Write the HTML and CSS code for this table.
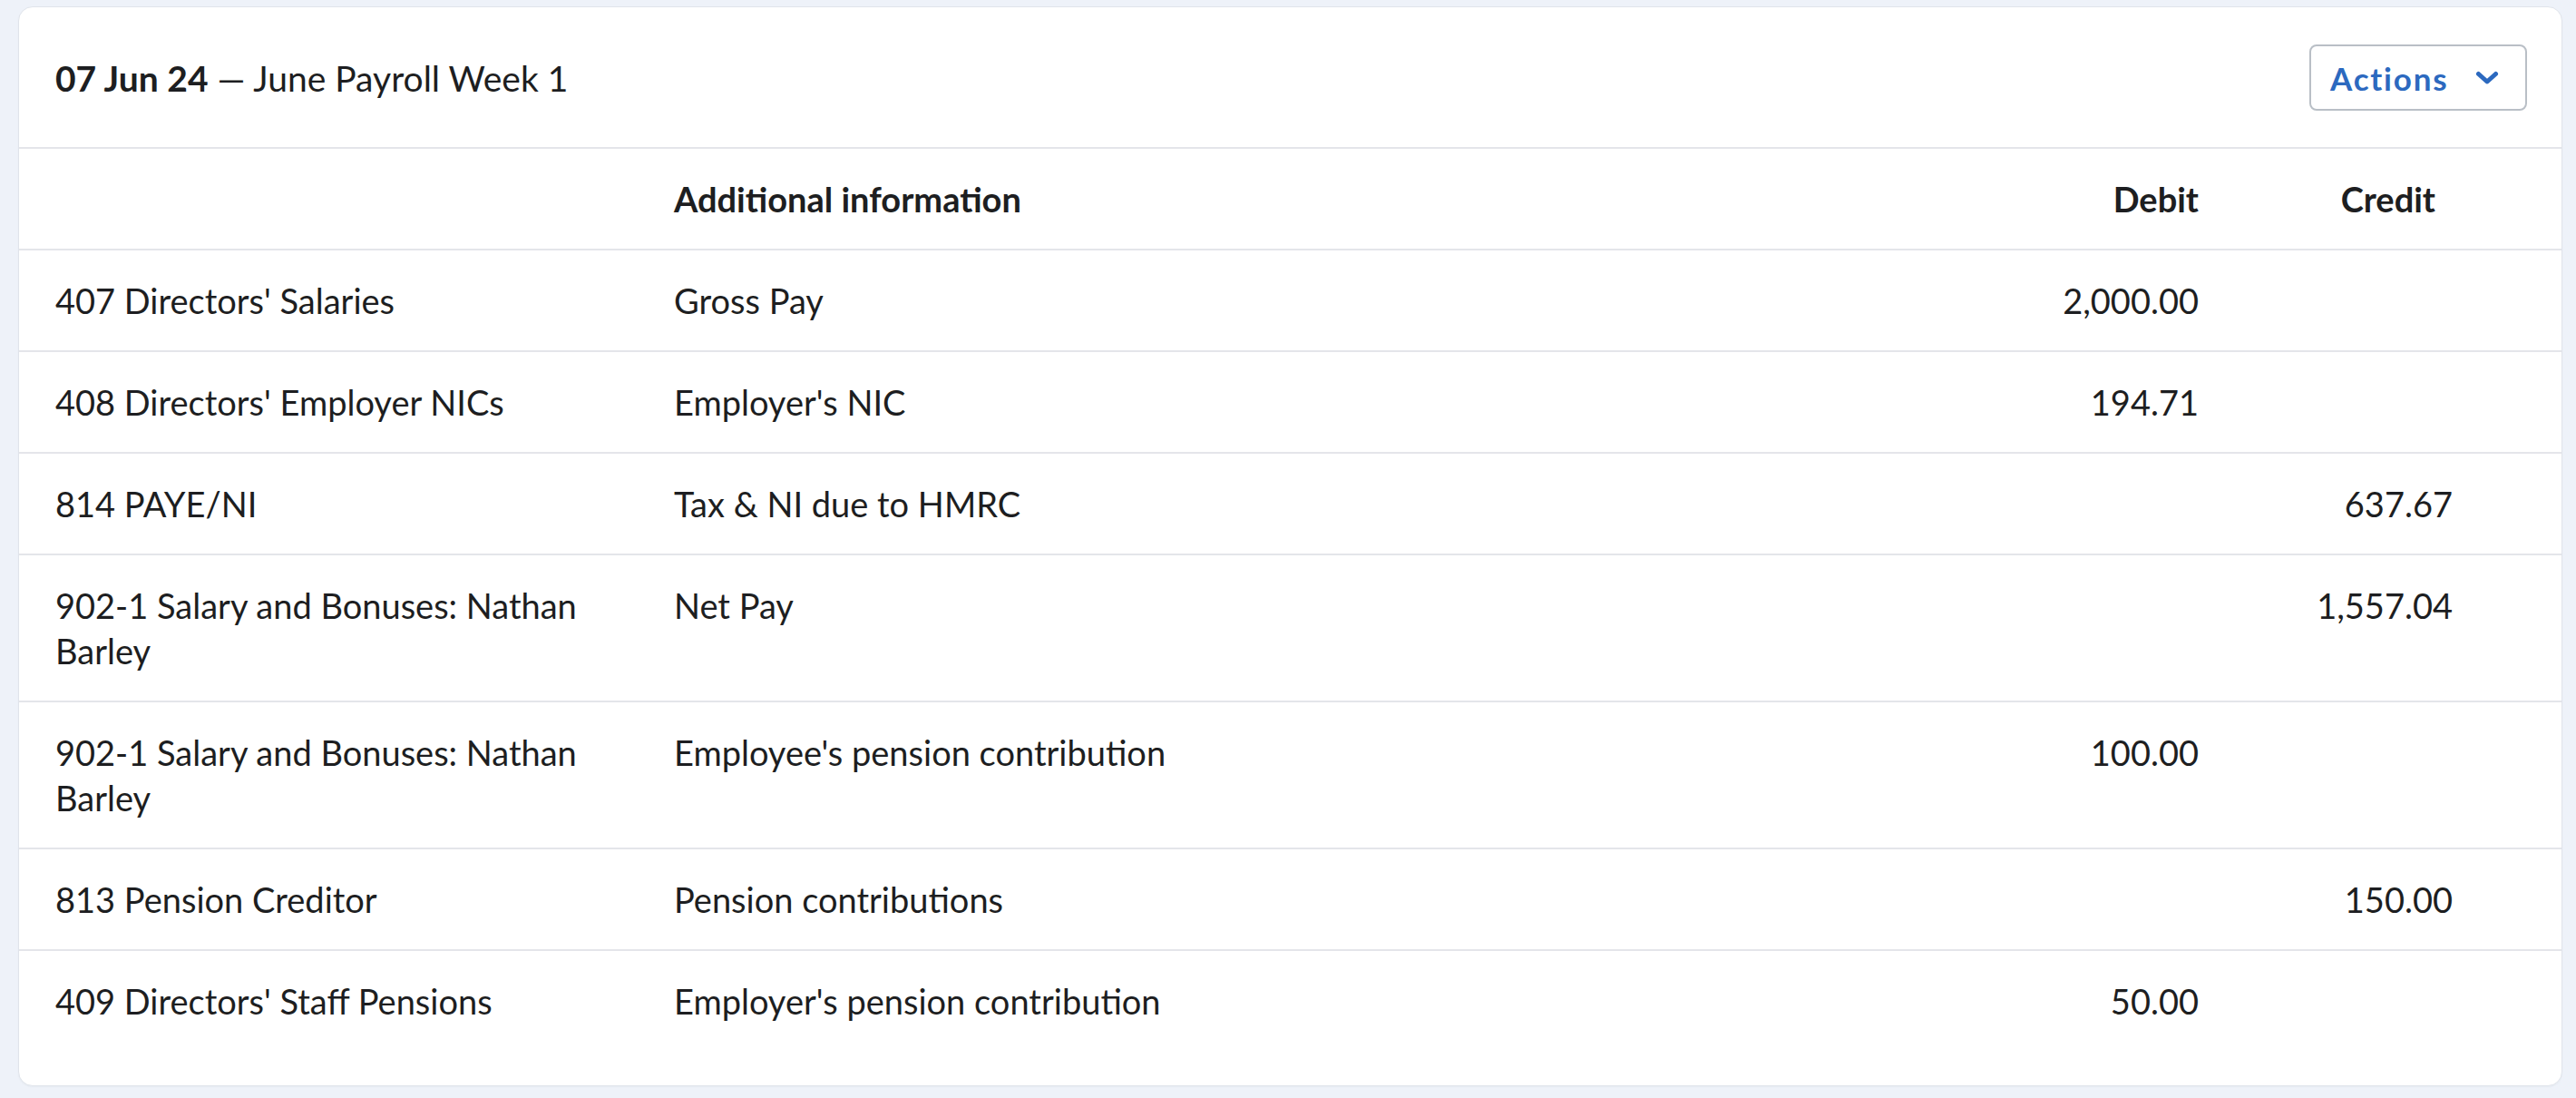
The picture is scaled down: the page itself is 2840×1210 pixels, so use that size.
FILE: index.html
```html
<!DOCTYPE html>
<html lang="en">
<head>
<meta charset="utf-8">
<title>June Payroll Week 1</title>
<link rel="stylesheet" href="styles.css">
</head>
<body>
<section class="card">
  <header class="card-header">
    <h1 class="title"><strong>07 Jun 24</strong> — June Payroll Week 1</h1>
    <button class="actions" type="button">
      <span>Actions</span>
      <svg class="chevron" width="26" height="16" viewBox="0 0 26 16" aria-hidden="true"><polyline points="3.5,3.5 13,12 22.5,3.5" fill="none" stroke="currentColor" stroke-width="5" stroke-linecap="round" stroke-linejoin="round"/></svg>
    </button>
  </header>
  <div class="table">
    <div class="row head">
      <div class="cell"></div>
      <div class="cell">Additional information</div>
      <div class="cell num">Debit</div>
      <div class="cell num credit-head">Credit</div>
    </div>
    <div class="row">
      <div class="cell acct">407 Directors' Salaries</div>
      <div class="cell">Gross Pay</div>
      <div class="cell num">2,000.00</div>
      <div class="cell num"></div>
    </div>
    <div class="row">
      <div class="cell acct">408 Directors' Employer NICs</div>
      <div class="cell">Employer's NIC</div>
      <div class="cell num">194.71</div>
      <div class="cell num"></div>
    </div>
    <div class="row">
      <div class="cell acct">814 PAYE/NI</div>
      <div class="cell">Tax &amp; NI due to HMRC</div>
      <div class="cell num"></div>
      <div class="cell num">637.67</div>
    </div>
    <div class="row">
      <div class="cell acct">902-1 Salary and Bonuses: Nathan Barley</div>
      <div class="cell">Net Pay</div>
      <div class="cell num"></div>
      <div class="cell num">1,557.04</div>
    </div>
    <div class="row">
      <div class="cell acct">902-1 Salary and Bonuses: Nathan Barley</div>
      <div class="cell">Employee's pension contribution</div>
      <div class="cell num">100.00</div>
      <div class="cell num"></div>
    </div>
    <div class="row">
      <div class="cell acct">813 Pension Creditor</div>
      <div class="cell">Pension contributions</div>
      <div class="cell num"></div>
      <div class="cell num">150.00</div>
    </div>
    <div class="row last">
      <div class="cell acct">409 Directors' Staff Pensions</div>
      <div class="cell">Employer's pension contribution</div>
      <div class="cell num">50.00</div>
      <div class="cell num"></div>
    </div>
  </div>
</section>
</body>
</html>
```
FILE: styles.css
```css
html, body {
  margin: 0;
  background: #eef2f9;
}
body {
  padding: 7px 15px 12px 20px;
  font-family: Lato, "Liberation Sans", Arial, sans-serif;
  color: #1d1e21;
  font-size: 38px;
}
.card {
  background: #ffffff;
  border: 1px solid #e0e4eb;
  border-radius: 16px;
  padding-bottom: 38px;
  box-shadow: 0 1px 2px rgba(30, 40, 60, 0.04);
}
.card-header {
  display: flex;
  align-items: center;
  justify-content: space-between;
  padding: 41px 38px 40px 40px;
  border-bottom: 2px solid #e4e5ea;
}
.title {
  margin: 0;
  font-size: 39px;
  font-weight: 400;
  line-height: 50px;
}
.title strong {
  font-weight: 700;
}
.actions {
  display: flex;
  align-items: center;
  gap: 30px;
  height: 73px;
  width: 240px;
  padding: 0 0 0 21px;
  background: #ffffff;
  border: 2px solid #b9bfc6;
  border-radius: 8px;
  color: #2c69bf;
  font-family: Lato, "Liberation Sans", Arial, sans-serif;
  font-size: 35px;
  font-weight: 700;
  letter-spacing: 1.8px;
  cursor: pointer;
}
.chevron {
  display: block;
}
.row {
  display: grid;
  grid-template-columns: 682px 1fr 280px 280px;
  padding: 0 120px 0 40px;
  border-bottom: 2px solid #e4e5ea;
}
.row.last {
  border-bottom: none;
}
.cell {
  padding: 30px 0;
  line-height: 50px;
}
.acct {
  padding-right: 60px;
}
.head .cell {
  font-weight: 700;
}
.num {
  text-align: right;
}
.credit-head {
  padding-right: 19px;
}
```
